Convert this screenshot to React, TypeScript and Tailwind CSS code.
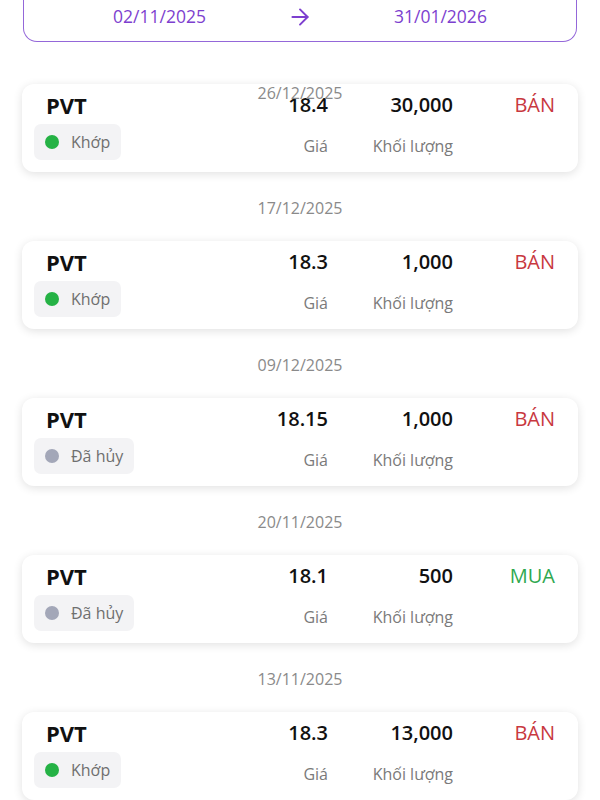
import { ArrowRight } from 'lucide-react'

type Order = {
  date: string
  symbol: string
  price: string
  volume: string
  side: 'BÁN' | 'MUA'
  status: 'Khớp' | 'Đã hủy'
}

const orders: Order[] = [
  { date: '26/12/2025', symbol: 'PVT', price: '18.4', volume: '30,000', side: 'BÁN', status: 'Khớp' },
  { date: '17/12/2025', symbol: 'PVT', price: '18.3', volume: '1,000', side: 'BÁN', status: 'Khớp' },
  { date: '09/12/2025', symbol: 'PVT', price: '18.15', volume: '1,000', side: 'BÁN', status: 'Đã hủy' },
  { date: '20/11/2025', symbol: 'PVT', price: '18.1', volume: '500', side: 'MUA', status: 'Đã hủy' },
  { date: '13/11/2025', symbol: 'PVT', price: '18.3', volume: '13,000', side: 'BÁN', status: 'Khớp' },
]

function OrderCard({ order }: { order: Order }) {
  const matched = order.status === 'Khớp'
  return (
    <div className="bg-white rounded-[12px] shadow-[0_2px_10px_rgba(0,0,0,0.12)] pt-[7px] pb-[12px] pl-[12px] pr-[23px]">
      <div className="grid grid-cols-[1fr_80px_125px_102px] grid-rows-[28px_36px] gap-y-[5px]">
        <div className="pl-[12px] text-[22px] leading-[28px] font-bold text-[#111]">{order.symbol}</div>
        <div className="text-right text-[20px] leading-[28px] font-semibold text-[#111]">{order.price}</div>
        <div className="text-right text-[20px] leading-[28px] font-semibold text-[#111]">{order.volume}</div>
        <div
          className={`text-right text-[20px] leading-[28px] ${
            order.side === 'BÁN' ? 'text-[#c8383f]' : 'text-[#2fa84f]'
          }`}
        >
          {order.side}
        </div>

        <div>
          <span className="inline-flex items-center h-[36px] rounded-[7px] bg-[#f3f3f5] pl-[11px] pr-[11px] gap-[12px]">
            <span className={`w-[14px] h-[14px] rounded-full ${matched ? 'bg-[#25b245]' : 'bg-[#a3a7b8]'}`} />
            <span className="text-[16px] leading-[24px] text-[#6f6f6f]">{order.status}</span>
          </span>
        </div>
        <div className="text-right text-[16px] leading-[24px] text-[#7a7a7a] mt-[10px]">Giá</div>
        <div className="text-right text-[16px] leading-[24px] text-[#7a7a7a] mt-[10px]">Khối lượng</div>
        <div />
      </div>
    </div>
  )
}

export default function App() {
  const [first, ...rest] = orders
  return (
    <div className="min-h-[800px] bg-white px-[22px] font-['Open_Sans',sans-serif] overflow-hidden">
      {/* Date range */}
      <div className="mx-[1px] h-[42px] border-[1.5px] border-t-0 border-[#9467d9] rounded-b-[14px] flex items-center justify-center gap-[81px] pb-[8px] text-[#7d3fcf] text-[17.5px] font-medium">
        <span>02/11/2025</span>
        <ArrowRight size={26} strokeWidth={1.8} />
        <span>31/01/2026</span>
      </div>

      {/* First group: sticky date header over the card */}
      <div className="relative mt-[42px]">
        <OrderCard order={first} />
        <div className="absolute left-0 right-0 top-[-3px] text-center text-[16px] leading-[24px] text-[#8a8a8a]">
          {first.date}
        </div>
      </div>

      {rest.map((o, i) => (
        <div key={i}>
          <div className="text-center text-[16px] leading-[24px] text-[#8a8a8a] mt-[24px] mb-[21px]">{o.date}</div>
          <OrderCard order={o} />
        </div>
      ))}
    </div>
  )
}
